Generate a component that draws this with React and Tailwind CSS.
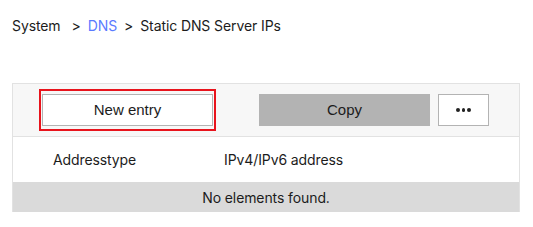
import React from 'react';

export default function App() {
  return (
    <div className="w-[533px] h-[227px] bg-white text-[14px] text-[#1c1c1c] font-['Inter',sans-serif]">
      <div className="flex items-center h-[52px] pl-[12px] pb-[1px] tracking-[-0.1px]">
        <span>System</span>
        <span className="ml-[11px]">&gt;</span>
        <span className="ml-[7px] text-[#5b7bff]">DNS</span>
        <span className="ml-[7px]">&gt;</span>
        <span className="ml-[7px]">Static DNS Server IPs</span>
      </div>

      <div className="ml-[12px] mt-[31px] w-[508px] border border-[#e2e2e2] border-b-0">
        <div className="flex items-center h-[53px] bg-[#f7f7f7] border-b border-[#e2e2e2]">
          <div className="ml-[26px] border-2 border-[#e8131c] px-[1px] py-[3px]">
            <button className="w-[171px] h-[32px] bg-white border border-[#b3b3b3] font-['Liberation_Sans',sans-serif] text-[15px]">
              New entry
            </button>
          </div>
          <button className="ml-[43px] w-[171px] h-[32px] bg-[#b3b3b3] font-['Liberation_Sans',sans-serif] text-[15px]">
            Copy
          </button>
          <button className="ml-[8px] w-[51px] h-[32px] bg-white border border-[#b3b3b3] flex items-center justify-center gap-[2px]">
            <span className="w-[3.5px] h-[3.5px] rounded-full bg-[#222]" />
            <span className="w-[3.5px] h-[3.5px] rounded-full bg-[#222]" />
            <span className="w-[3.5px] h-[3.5px] rounded-full bg-[#222]" />
          </button>
        </div>
        <div className="flex items-center h-[45px] bg-white tracking-[-0.1px]">
          <span className="ml-[40px] w-[171px]">Addresstype</span>
          <span>IPv4/IPv6 address</span>
        </div>
        <div className="flex items-center justify-center h-[30px] bg-[#dadada] tracking-[-0.1px]">
          No elements found.
        </div>
      </div>
    </div>
  );
}
